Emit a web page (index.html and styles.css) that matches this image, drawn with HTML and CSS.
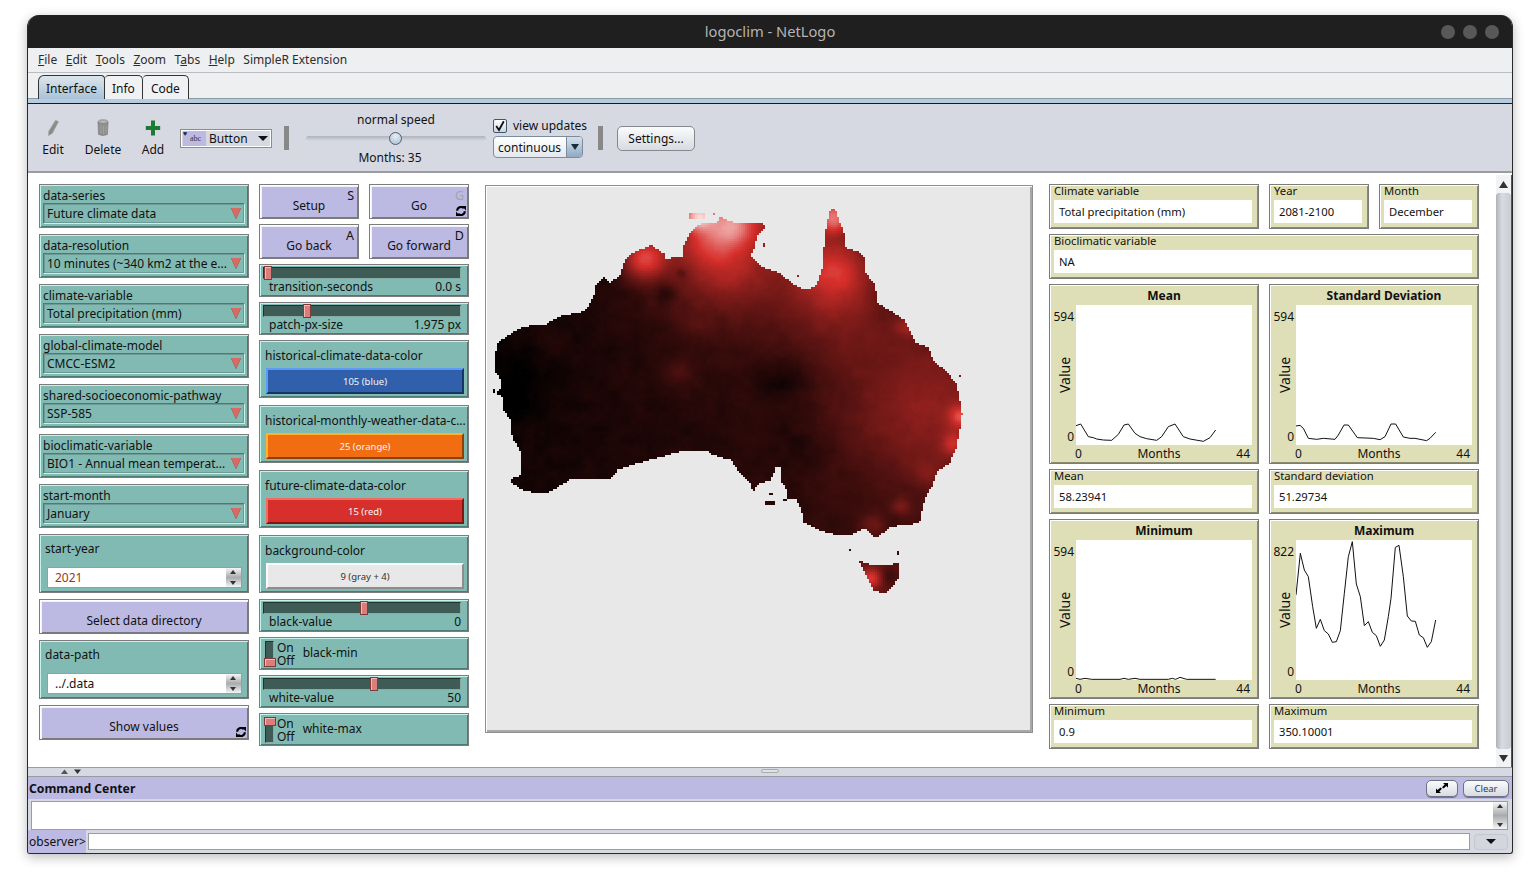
FILE: index.html
```html
<!DOCTYPE html>
<html lang="en">
<head>
<meta charset="utf-8">
<title>logoclim - NetLogo</title>
<link rel="stylesheet" href="styles.css">
</head>
<body>
<svg class="defs" width="0" height="0" aria-hidden="true">
  <symbol id="forever" viewBox="0 0 10 10">
    <path d="M1.2 4.8A3.8 3.8 0 0 1 7.8 2.2" fill="none" stroke="#000" stroke-width="2.1"/>
    <path d="M6 0L10 0L10 4.6Z" fill="#000"/>
    <path d="M8.8 5.2A3.8 3.8 0 0 1 2.2 7.8" fill="none" stroke="#000" stroke-width="2.1"/>
    <path d="M4 10L0 10L0 5.4Z" fill="#000"/>
  </symbol>
</svg>
<div class="window">
  <header class="titlebar">
    <span class="title">logoclim - NetLogo</span>
    <span class="dots"><i></i><i></i><i></i></span>
  </header>
  <nav class="menubar">
    <span><u>F</u>ile</span><span><u>E</u>dit</span><span><u>T</u>ools</span><span><u>Z</u>oom</span><span>T<u>a</u>bs</span><span><u>H</u>elp</span><span>SimpleR Extension</span>
  </nav>
  <div class="tabbar">
    <span class="tab active">Interface</span><span class="tab">Info</span><span class="tab">Code</span>
  </div>
  <div class="toolbar">
    <div class="tool">
      <svg width="14" height="18" viewBox="0 0 14 18"><path d="M9.5 1.2L12.6 2.6L6.5 14.2L2.4 16.8L2.7 12.2Z" fill="#8b8b8b" stroke="#a9a9a9" stroke-width=".6"/></svg>
      <span>Edit</span>
    </div>
    <div class="tool">
      <svg width="14" height="18" viewBox="0 0 14 18"><ellipse cx="7" cy="3" rx="5" ry="2.2" fill="#b5b5b5" stroke="#888" stroke-width=".8"/><path d="M2 3.4L2.6 15.4Q7 17.6 11.4 15.4L12 3.4Q7 6 2 3.4Z" fill="#8f8f8f" stroke="#7c7c7c" stroke-width=".7"/><path d="M5 6.5V15M7.5 6.5V15.6M10 6.5V15" stroke="#a8a8a8" stroke-width=".7"/></svg>
      <span>Delete</span>
    </div>
    <div class="tool">
      <svg width="16" height="18" viewBox="0 0 16 18"><path d="M6 1.5H10V7H15.2V11H10V16.5H6V11H.8V7H6Z" fill="#1c7a32"/></svg>
      <span>Add</span>
    </div>
    <div class="widget-picker">
      <span class="picker-icon"><b>♥</b><em>abc</em></span>
      <span class="picker-text">Button</span>
      <span class="caret"></span>
    </div>
    <span class="sep sep-a"></span>
    <div class="speed">
      <span class="speed-top">normal speed</span>
      <span class="speed-track"><i></i></span>
      <span class="speed-bottom">Months: 35</span>
    </div>
    <div class="updates">
      <label class="check"><span class="box"><svg width="12" height="12" viewBox="0 0 12 12"><path d="M2.2 6L5 10L9.8 1.2" fill="none" stroke="#111" stroke-width="1.8"/></svg></span>view updates</label>
      <div class="combo"><span>continuous</span><span class="combo-arrow"><span class="caret small"></span></span></div>
    </div>
    <span class="sep sep-b"></span>
    <span class="settings">Settings...</span>
  </div>

  <main class="workspace">
    <div class="col col-left">
      <div class="w teal chooser"><span class="label">data-series</span><span class="select"><span>Future climate data</span><i></i></span></div>
      <div class="w teal chooser"><span class="label">data-resolution</span><span class="select"><span>10 minutes (~340 km2 at the e...</span><i></i></span></div>
      <div class="w teal chooser"><span class="label">climate-variable</span><span class="select"><span>Total precipitation (mm)</span><i></i></span></div>
      <div class="w teal chooser"><span class="label">global-climate-model</span><span class="select"><span>CMCC-ESM2</span><i></i></span></div>
      <div class="w teal chooser"><span class="label">shared-socioeconomic-pathway</span><span class="select"><span>SSP-585</span><i></i></span></div>
      <div class="w teal chooser"><span class="label">bioclimatic-variable</span><span class="select"><span>BIO1 - Annual mean temperat...</span><i></i></span></div>
      <div class="w teal chooser"><span class="label">start-month</span><span class="select"><span>January</span><i></i></span></div>
      <div class="w teal input"><span class="label">start-year</span><span class="field"><span class="num">2021</span><span class="spin"></span></span></div>
      <div class="w btn wide">Select data directory</div>
      <div class="w teal input"><span class="label">data-path</span><span class="field"><span>../.data</span><span class="spin"></span></span></div>
      <div class="w btn wide">Show values<svg class="fv"><use href="#forever"/></svg></div>
    </div>

    <div class="col col-mid">
      <div class="stack s5">
        <div class="row">
          <div class="w btn half">Setup<kbd>S</kbd></div>
          <div class="w btn half">Go<kbd class="dim">G</kbd><svg class="fv"><use href="#forever"/></svg></div>
        </div>
        <div class="row">
          <div class="w btn half">Go back<kbd>A</kbd></div>
          <div class="w btn half">Go forward<kbd>D</kbd></div>
        </div>
        <div class="w teal slider"><span class="track"><i class="handle" style="left:0"></i></span><span class="sl-text"><span>transition-seconds</span><span>0.0 s</span></span></div>
        <div class="w teal slider"><span class="track"><i class="handle" style="left:39px"></i></span><span class="sl-text"><span>patch-px-size</span><span>1.975 px</span></span></div>
      </div>
      <div class="stack s7">
        <div class="w teal color"><span class="label">historical-climate-data-color</span><span class="swatch blue">105 (blue)</span></div>
        <div class="w teal color"><span class="label">historical-monthly-weather-data-c...</span><span class="swatch orange">25 (orange)</span></div>
        <div class="w teal color"><span class="label">future-climate-data-color</span><span class="swatch red">15 (red)</span></div>
        <div class="w teal color"><span class="label">background-color</span><span class="swatch gray">9 (gray + 4)</span></div>
      </div>
      <div class="stack s5b">
        <div class="w teal slider"><span class="track"><i class="handle" style="left:96px"></i></span><span class="sl-text"><span>black-value</span><span>0</span></span></div>
        <div class="w teal switch"><span class="sw off"><i></i></span><span class="onoff"><span>On</span><span>Off</span></span><span class="sw-label">black-min</span></div>
        <div class="w teal slider"><span class="track"><i class="handle" style="left:106px"></i></span><span class="sl-text"><span>white-value</span><span>50</span></span></div>
        <div class="w teal switch"><span class="sw"><i></i></span><span class="onoff"><span>On</span><span>Off</span></span><span class="sw-label">white-max</span></div>
      </div>
    </div>

    <div class="view"><canvas id="map" width="544" height="544"></canvas></div>

    <div class="col col-right">
      <div class="row">
        <div class="w mon m-wide"><span class="m-label">Climate variable</span><span class="m-value">Total precipitation (mm)</span></div>
        <div class="w mon m-small"><span class="m-label">Year</span><span class="m-value">2081-2100</span></div>
        <div class="w mon m-small"><span class="m-label">Month</span><span class="m-value">December</span></div>
      </div>
      <div class="w mon"><span class="m-label">Bioclimatic variable</span><span class="m-value">NA</span></div>
      <div class="row">
        <div class="w plot">
          <span class="p-title">Mean</span>
          <span class="p-y"><span>594</span><span class="p-name">Value</span><span>0</span></span>
          <svg class="p-area" viewBox="108 390 528 420" preserveAspectRatio="none"><polyline points="108,752 122,747 145,785 160,788 170,792 190,795 215,796 235,778 252,750 265,747 285,775 300,785 320,791 350,796 365,785 385,755 405,747 430,785 450,792 490,799 510,788 527,765"/></svg>
          <span class="p-x"><span>0</span><span>Months</span><span>44</span></span>
        </div>
        <div class="w plot">
          <span class="p-title">Standard Deviation</span>
          <span class="p-y"><span>594</span><span class="p-name">Value</span><span>0</span></span>
          <svg class="p-area" viewBox="768 390 528 420" preserveAspectRatio="none"><polyline points="768,753 780,751 790,760 805,790 830,793 850,790 885,793 895,780 912,750 925,750 952,788 1000,790 1020,794 1035,785 1053,747 1067,747 1090,786 1110,790 1125,790 1160,797 1170,790 1187,772"/></svg>
          <span class="p-x"><span>0</span><span>Months</span><span>44</span></span>
        </div>
      </div>
      <div class="row">
        <div class="w mon m-half"><span class="m-label">Mean</span><span class="m-value">58.23941</span></div>
        <div class="w mon m-half"><span class="m-label">Standard deviation</span><span class="m-value">51.29734</span></div>
      </div>
      <div class="row">
        <div class="w plot">
          <span class="p-title">Minimum</span>
          <span class="p-y"><span>594</span><span class="p-name">Value</span><span>0</span></span>
          <svg class="p-area" viewBox="108 90 528 420" preserveAspectRatio="none"><polyline points="108,505 120,508 135,505 155,508 240,508 252,505 265,508 285,505 300,508 385,508 397,505 407,508 420,502 440,508 527,508"/></svg>
          <span class="p-x"><span>0</span><span>Months</span><span>44</span></span>
        </div>
        <div class="w plot">
          <span class="p-title">Maximum</span>
          <span class="p-y"><span>822</span><span class="p-name">Value</span><span>0</span></span>
          <svg class="p-area" viewBox="768 90 528 420" preserveAspectRatio="none"><polyline points="768,255 781,130 793,180 805,200 818,290 829,355 841,328 853,362 865,372 877,397 889,395 901,362 913,250 925,140 937,95 949,222 961,260 973,347 985,335 997,367 1009,377 1021,409 1033,390 1045,320 1053,265 1066,112 1077,106 1090,200 1102,318 1114,333 1126,334 1138,375 1150,383 1162,412 1174,395 1187,330"/></svg>
          <span class="p-x"><span>0</span><span>Months</span><span>44</span></span>
        </div>
      </div>
      <div class="row">
        <div class="w mon m-half"><span class="m-label">Minimum</span><span class="m-value">0.9</span></div>
        <div class="w mon m-half"><span class="m-label">Maximum</span><span class="m-value">350.10001</span></div>
      </div>
    </div>

    <div class="vscroll">
      <span class="sb-btn"><svg width="9" height="7" viewBox="0 0 9 7"><path d="M4.5 0L9 7H0Z" fill="#333"/></svg></span>
      <span class="sb-thumb"></span>
      <span class="sb-btn"><svg width="9" height="7" viewBox="0 0 9 7"><path d="M0 0H9L4.5 7Z" fill="#333"/></svg></span>
    </div>
  </main>

  <div class="divider">
    <span class="div-arrows"><svg width="22" height="5" viewBox="0 0 22 5"><path d="M0 5L3.5 .5L7 5Z" fill="#555"/><path d="M13 .5H20L16.5 5Z" fill="#333"/></svg></span>
    <span class="div-grip"></span>
  </div>
  <div class="cc-head">
    <span class="cc-title">Command Center</span>
    <span class="cc-btn cc-expand"><svg width="14" height="12" viewBox="0 0 14 12"><path d="M8 1H13V5.5L11.3 4L8.6 6.6L7 5.2L9.7 2.6ZM6 11H1V6.5L2.7 8L5.4 5.4L7 6.8L4.3 9.4Z" fill="#000"/></svg></span>
    <span class="cc-btn cc-clear">Clear</span>
  </div>
  <div class="cc-output"><span class="spin cc-spin"></span></div>
  <div class="cc-input">
    <span class="observer">observer&gt;</span>
    <span class="cc-field"></span>
    <span class="cc-drop"><span class="caret"></span></span>
  </div>
</div>
<script src="map.js"></script>
</body>
</html>
```
FILE: styles.css
```css
* { box-sizing: border-box; }
html, body { margin: 0; height: 100%; }
body {
  background: #fff;
  padding: 15px 27px 40px;
  font-family: "Noto Sans", "Open Sans", sans-serif;
  font-size: 12px;
  color: #111;
  overflow: hidden;
}
.defs { position: absolute; }
.window {
  width: 1486px;
  height: 839px;
  display: flex;
  flex-direction: column;
  background: #d6d9e2;
  border-radius: 12px 12px 3px 3px;
  border: 1px solid #2a2a2a;
  border-top: 0;
  overflow: hidden;
  box-shadow: 0 3px 12px rgba(0,0,0,.28);
}

/* title bar */
.titlebar {
  position: relative;
  height: 33px;
  flex: none;
  background: #1f1f1f;
  display: flex;
  align-items: center;
  justify-content: center;
  margin: 0 -1px;
}
.title { color: #b4b4b4; font-size: 14.7px; margin-top: -1px; }
.dots { position: absolute; right: 14px; top: 10px; display: flex; gap: 8px; }
.dots i { width: 14px; height: 14px; border-radius: 50%; background: #585858; }

/* menu */
.menubar {
  height: 25px;
  flex: none;
  background: #eeeff1;
  display: flex;
  align-items: center;
  padding: 0 0 2px 10px;
  gap: 8.5px;
  color: #2c2c2c;
  border-bottom: 1px solid #b9bcc3;
}

/* tabs */
.tabbar {
  height: 31px;
  flex: none;
  background: #eeeff1;
  display: flex;
  align-items: flex-end;
  padding: 0 0 4px 10px;
  border-bottom: 1px solid #101a28;
  position: relative;
}
.tabbar::after {
  content: "";
  position: absolute;
  left: 0; right: 0; bottom: 0;
  height: 4px;
  background: #b5cbe0;
  border-top: 1px solid #8a99a8;
}
.tab {
  height: 24px;
  padding: 2px 7px 0;
  border: 1px solid #333;
  border-bottom: 0;
  border-left: 0;
  border-radius: 4px 5px 0 0;
  display: flex;
  align-items: center;
  background: #f0f1f3;
  position: relative;
  z-index: 1;
}
.tab:last-child { padding: 2px 8px 0; }
.tab.active {
  width: 67px;
  justify-content: center;
  border-left: 1px solid #333;
  background: linear-gradient(#dde5ec, #a8c3da);
  border-radius: 6px 4px 0 0;
}

/* toolbar */
.toolbar {
  height: 69px;
  flex: none;
  display: flex;
  align-items: flex-start;
  border-bottom: 2px solid #9a9ca2;
  position: relative;
}
.tool {
  width: 50px;
  padding-top: 15px;
  display: flex;
  flex-direction: column;
  align-items: center;
  gap: 4px;
  line-height: 17px;
}
.widget-picker {
  margin: 25px 0 0 2px;
  width: 92px;
  height: 19px;
  display: flex;
  align-items: center;
  border: 1px solid #8c8c8c;
  box-shadow: inset 1px 1px 0 #fff, inset -1px -1px 0 #fff;
  padding: 2px 3px 2px 2px;
}
.picker-icon {
  width: 23px; height: 15px;
  background: #bcbae3;
  position: relative;
  font-size: 8px;
  display: block;
}
.picker-icon b { position: absolute; left: 0; top: -2px; font-size: 7px; color: #223; line-height: 9px; }
.picker-icon em { position: absolute; left: 7px; top: 2px; font: 8px/12px "Liberation Serif", serif; color: #334; }
.picker-text { margin-left: 3px; flex: 1; }
.caret {
  display: block;
  width: 0; height: 0;
  border-left: 5px solid transparent;
  border-right: 5px solid transparent;
  border-top: 5px solid #111;
}
.caret.small { border-left-width: 4px; border-right-width: 4px; border-top-width: 6px; border-top-color: #1a2a3a; }
.sep { width: 5px; height: 24px; background: #888; display: block; margin-top: 22px; flex: none; }
.sep-a { margin-left: 12px; }
.speed {
  width: 180px;
  margin-left: 17px;
  height: 66px;
  position: relative;
  display: block;
}
.speed-top { position: absolute; left: 0; right: 0; top: 7px; text-align: center; }
.speed-bottom { position: absolute; left: 0; right: 12px; top: 45px; text-align: center; }
.speed-track {
  position: absolute;
  left: 0; right: 0; top: 32px;
  height: 5px;
  border-radius: 3px;
  background: linear-gradient(#aeb3bc, #d6dae0);
}
.speed-track i {
  position: absolute;
  left: 83px; top: -4px;
  width: 13px; height: 13px;
  border-radius: 50%;
  border: 1px solid #4d5f70;
  background: radial-gradient(circle at 50% 30%, #e6edf4, #a7bdd2);
}
.updates { margin-left: 7px; padding-top: 14px; display: flex; flex-direction: column; width: 95px; }
.check { display: flex; align-items: center; gap: 6px; line-height: 16px; white-space: nowrap; }
.box {
  width: 14px; height: 14px;
  border: 1px solid #3e5870;
  border-radius: 2px;
  background: linear-gradient(#fff, #cbd6e0);
  display: flex;
  align-items: center;
  justify-content: center;
}
.combo {
  margin-top: 2px;
  width: 90px;
  height: 22px;
  border: 1px solid #7d8c9c;
  border-radius: 4px;
  background: linear-gradient(#fff, #e3e8ee);
  display: flex;
  align-items: center;
  justify-content: space-between;
  padding-left: 4px;
  overflow: hidden;
}
.combo-arrow {
  width: 16px;
  height: 100%;
  background: linear-gradient(#d5e0eb, #8faac3);
  border-left: 1px solid #7d8c9c;
  display: flex;
  align-items: center;
  justify-content: center;
}
.sep-b { margin-left: 10px; }
.settings {
  margin: 22px 0 0 14px;
  width: 78px;
  height: 25px;
  border: 1px solid #84888f;
  border-radius: 5px;
  background: linear-gradient(#fafbfc, #d8dbe2);
  display: flex;
  align-items: center;
  justify-content: center;
}

/* workspace */
.workspace {
  height: 594px;
  flex: none;
  background: #fff;
  display: flex;
  padding: 11px 0 0 11px;
  position: relative;
}
.col { display: flex; flex-direction: column; width: 210px; flex: none; }
.col-left { gap: 6px; }
.col-mid { margin-left: 10px; }
.col-right { width: 430px; margin-left: 16px; gap: 5px; }
.stack { display: flex; flex-direction: column; }
.s5 { gap: 5px; }
.s7 { gap: 7px; margin-top: 5px; }
.s5b { gap: 5px; margin-top: 6px; }
.row { display: flex; gap: 10px; }

.w { border: 1px solid #7c7c7c; position: relative; flex: none; }
.teal {
  background: #81bab2;
  box-shadow: inset 1px 1px 0 #c2f4ec, inset -1px -1px 0 #4e7a74;
}
.label { display: block; line-height: 15px; padding-left: 3px; white-space: nowrap; }
.chooser { height: 44px; padding-top: 3px; }
.select {
  margin: 0 3px 0 3px;
  height: 21px;
  display: flex;
  align-items: center;
  justify-content: space-between;
  padding: 0 3px 0 3px;
  border: 1px solid;
  border-color: #4e7a74 #c2f4ec #c2f4ec #4e7a74;
  outline: 1px solid #6d9a94;
  outline-offset: -2px;
  white-space: nowrap;
}
.select i {
  width: 0; height: 0;
  border-left: 5.5px solid transparent;
  border-right: 5.5px solid transparent;
  border-top: 11px solid #d96a62;
  filter: drop-shadow(0 0 .6px #334);
}
.input { height: 59px; padding-top: 6px; }
.input .label { padding-left: 5px; line-height: 16px; }
.field {
  margin: 10px 6px 0 7px;
  height: 21px;
  background: #fff;
  border: 1px solid #9c9c9c;
  display: flex;
  align-items: center;
  justify-content: space-between;
  padding-left: 7px;
}
.num { color: #99390f; }
.spin {
  width: 15px;
  height: 100%;
  flex: none;
  background:
    linear-gradient(#f4f5f6, #a9abae 50%, #f4f5f6);
  position: relative;
}
.spin::before, .spin::after {
  content: "";
  position: absolute;
  left: 4px;
  border-left: 3.5px solid transparent;
  border-right: 3.5px solid transparent;
}
.spin::before { top: 2px; border-bottom: 4px solid #333; }
.spin::after { bottom: 2px; border-top: 4px solid #333; }
.btn {
  background: #bcbae3;
  box-shadow: inset 1px 1px 0 #fff, inset 2px 2px 0 #f2f2fa, inset -1px -1px 0 #7a7a7a;
  display: flex;
  align-items: center;
  justify-content: center;
  padding-top: 8px;
  height: 35px;
}
.half { width: 100px; }
.btn kbd {
  position: absolute;
  right: 4px;
  top: 2px;
  font: inherit;
  font-size: 12.5px;
}
.btn kbd.dim { color: #a3a3a8; }
.fv { position: absolute; right: 2px; bottom: 2px; width: 10px; height: 10px; }
.slider { height: 33px; padding: 2px 7px 0 2px; }
.track {
  display: block;
  height: 12px;
  margin-left: 1px;
  position: relative;
  background: #3f5b56;
  border: 1px solid;
  border-color: #22322f #87aca6 #87aca6 #22322f;
}
.handle {
  position: absolute;
  top: -2px;
  width: 8px;
  height: 14px;
  background: #db7d7b;
  border: 1px solid #7d3b39;
  box-shadow: inset 1px 1px 0 #f3b9b7;
}
.sl-text {
  display: flex;
  justify-content: space-between;
  line-height: 15px;
  margin-left: 7px;
}
.color { height: 58px; padding-top: 6px; }
.color .label { padding-left: 5px; line-height: 17px; }
.swatch {
  margin: 4px 4px 0 6px;
  height: 26px;
  display: flex;
  align-items: center;
  justify-content: center;
  font-size: 9.5px;
  color: #f5f5f5;
  border: 2px solid;
}
.blue { background: #3060ac; border-color: #5c9cf6 #173560 #173560 #5c9cf6; }
.orange { background: #f26c12; border-color: #ffb32c #8c4206 #8c4206 #ffb32c; }
.red { background: #d72f2b; border-color: #f46c60 #7e1815 #7e1815 #f46c60; }
.gray { background: #e8e8e8; color: #333; border-color: #fafafa #8d8d8d #8d8d8d #fafafa; }
.switch { height: 33px; display: flex; align-items: center; padding-left: 3px; }
.sw {
  width: 9px;
  height: 26px;
  margin-left: 2px;
  background: #3f5b56;
  position: relative;
  display: block;
  border: 1px solid;
  border-color: #22322f #87aca6 #87aca6 #22322f;
}
.sw i {
  position: absolute;
  left: -2px;
  top: -1px;
  width: 12px;
  height: 9px;
  background: #db7d7b;
  border: 1px solid #7d3b39;
  box-shadow: inset 1px 1px 0 #f3b9b7;
}
.sw.off i { top: auto; bottom: -1px; }
.onoff { display: flex; flex-direction: column; line-height: 13px; margin-left: 3px; }
.sw-label { margin-left: 8px; margin-top: -3px; }

/* view */
.view {
  width: 548px;
  height: 548px;
  margin: 1px 0 0 16px;
  flex: none;
  background: #e8e8e8;
  border: 1px solid #8f8f8f;
  box-shadow: inset 1px 1px 0 #fff, inset -2px -2px 0 #a8a8a8;
  padding: 1px;
}
.view canvas { display: block; }

/* monitors */
.mon {
  background: #dfdfb7;
  box-shadow: inset 1px 1px 0 #fff, inset -1px -1px 0 #8a8a70;
  height: 45px;
  padding: 0 5px 0 4px;
  display: flex;
  flex-direction: column;
  font-size: 11.25px;
}
.m-wide, .m-half { width: 210px; }
.m-small { width: 100px; }
.m-label { line-height: 12px; height: 14px; }
.m-value {
  background: #fff;
  height: 23px;
  margin: 1px 1px 0 0;
  padding-left: 5px;
  display: flex;
  align-items: center;
  white-space: nowrap;
}

/* plots */
.plot {
  width: 210px;
  height: 180px;
  background: #dfdfb7;
  box-shadow: inset 1px 1px 0 #fff, inset -1px -1px 0 #8a8a70;
  display: grid;
  grid-template-columns: 26px 176px;
  grid-template-rows: 20px 140px 18px;
}
.p-title { grid-column: 2; font-weight: 700; text-align: center; line-height: 21px; }
.p-y {
  grid-column: 1;
  grid-row: 2;
  display: flex;
  flex-direction: column;
  justify-content: space-between;
  align-items: flex-end;
  padding: 4px 2px 0 0;
  line-height: 16px;
  position: relative;
}
.p-name {
  position: absolute;
  left: 7px;
  top: 50%;
  writing-mode: vertical-rl;
  transform: translateY(-50%) rotate(180deg);
  font-size: 14px;
  line-height: 16px;
}
.p-area { grid-column: 2; grid-row: 2; width: 176px; height: 140px; background: #fff; display: block; }
.p-area polyline { fill: none; stroke: #111; stroke-width: 1; vector-effect: non-scaling-stroke; }
.p-x {
  grid-column: 2;
  grid-row: 3;
  display: grid;
  grid-template-columns: 1fr 1fr 1fr;
  line-height: 18px;
  padding: 0 2px 0 0;
}
.p-x span:first-child { margin-left: -1px; }
.p-x span:nth-child(2) { text-align: center; margin-left: -19px; margin-right: -11px; }
.p-x span:last-child { text-align: right; }

/* scrollbar */
.vscroll {
  position: absolute;
  right: 0;
  top: 2px;
  bottom: 0;
  width: 16px;
  display: flex;
  flex-direction: column;
  border-right: 1px solid #555;
}
.sb-btn { height: 18px; display: flex; align-items: center; justify-content: center; background: #f2f3f5; flex: none; }
.sb-thumb { flex: 1; background: linear-gradient(90deg, #aeb2ba, #d8dbe1 40%, #c8ccd3); border-radius: 3px; }

/* divider */
.divider {
  height: 10px;
  flex: none;
  position: relative;
  background: #d6d9e2;
  border-top: 1px solid #9a9ca2;
  border-bottom: 1px solid #9a9ca2;
  display: flex;
  align-items: center;
  justify-content: center;
}
.div-arrows { position: absolute; left: 33px; top: 1px; height: 6px; display: flex; }
.div-grip { width: 18px; height: 4px; border: 1px solid #aaa; border-radius: 2px; background: #e0e2e8; margin-top: -3px; }

/* command center */
.cc-head {
  height: 22px;
  flex: none;
  background: #bcbae3;
  display: flex;
  align-items: center;
  padding: 0 3px 0 1px;
  gap: 5px;
}
.cc-title { font-weight: 700; font-size: 12.2px; margin-right: auto; }
.cc-btn {
  height: 17px;
  border: 1px solid #6f7380;
  border-radius: 5px;
  background: linear-gradient(#fafbfc, #d7dae2);
  display: flex;
  align-items: center;
  justify-content: center;
  box-shadow: 0 1px 0 #777;
}
.cc-expand { width: 32px; }
.cc-clear { width: 46px; font-size: 9.5px; color: #2b3a55; }
.cc-output {
  height: 29px;
  flex: none;
  margin: 2px 4px 0 3px;
  background: #fff;
  border: 1px solid #9a9ca2;
  display: flex;
  justify-content: flex-end;
}
.cc-spin { width: 14px; }
.cc-input {
  flex: 1;
  display: flex;
  align-items: center;
}
.observer {
  width: 58px;
  height: 100%;
  background: #bcbae3;
  display: flex;
  align-items: center;
  padding-left: 1px;
  flex: none;
}
.cc-field {
  width: 1382px;
  height: 17px;
  margin-left: 2px;
  background: #fff;
  border: 1px solid #9a9ca2;
}
.cc-drop {
  width: 34px;
  height: 16px;
  margin-left: 4px;
  border-radius: 4px;
  background: #d3d6dd;
  border: 1px solid #c4c7cd;
  display: flex;
  align-items: center;
  justify-content: center;
}
```
FILE: map.js
```js
(function () {
  var main = [40,545,48,490,80,465,120,440,185,432,220,410,290,395,305,375,320,345,325,315,345,290,365,310,395,280,405,240,430,218,480,195,515,220,520,235,565,232,570,200,590,155,620,130,665,130,670,110,700,125,740,130,790,130,800,140,775,170,770,200,757,228,790,260,840,280,880,315,910,330,940,320,960,260,965,170,980,90,995,90,1020,160,1025,205,1060,215,1075,230,1080,280,1105,310,1115,370,1190,420,1220,490,1255,500,1270,540,1305,575,1335,610,1350,700,1345,740,1335,800,1315,850,1280,875,1265,920,1245,960,1230,1030,1150,1040,1110,1075,1075,1045,1040,1065,1005,1068,950,1050,905,1025,900,985,885,960,860,955,855,915,840,905,842,860,830,860,815,900,775,915,765,935,755,905,720,870,705,840,650,825,635,812,560,815,510,830,440,850,385,870,365,900,250,900,190,940,130,935,88,910,90,895,115,885,115,820,90,770,85,720,65,690,65,650,45,640,60,625,60,600,40,570];
  var tas = [1060,1140,1100,1158,1175,1150,1175,1185,1160,1215,1140,1238,1105,1235,1085,1195];
  var islands = [[588,102,630,118],[650,97,658,106],[793,188,798,202],[888,285,893,291],[1033,1105,1039,1115],[1170,1116,1175,1122],[800,965,826,973],[810,942,820,947],[850,960,860,962],[1342,585,1348,588],[34,630,40,636]];

  function inPoly(p, x, y) {
    var c = false;
    for (var i = 0, j = p.length - 2; i < p.length; j = i, i += 2) {
      if ((p[i + 1] > y) !== (p[j + 1] > y) &&
          x < (p[j] - p[i]) * (y - p[i + 1]) / (p[j + 1] - p[i + 1]) + p[i]) c = !c;
    }
    return c;
  }
  function inside(x, y) {
    if (inPoly(main, x, y) || inPoly(tas, x, y)) return true;
    return islands.some(function (r) { return x >= r[0] && x <= r[2] && y >= r[1] && y <= r[3]; });
  }

  var seed = 0;
  var table = [];
  for (var k = 0; k < 4096; k++) { seed = (seed * 1664525 + 1013904223) >>> 0; table.push(seed / 4294967296); }
  function lattice(i, j) { return table[((i * 73 + j * 179) % 4096 + 4096) % 4096]; }
  function noise(x, y) {
    var i = Math.floor(x), j = Math.floor(y), u = x - i, v = y - j;
    u = u * u * (3 - 2 * u); v = v * v * (3 - 2 * v);
    return (lattice(i, j) * (1 - u) + lattice(i + 1, j) * u) * (1 - v) +
           (lattice(i, j + 1) * (1 - u) + lattice(i + 1, j + 1) * u) * v;
  }
  function g(x, y, cx, cy, s, a) {
    var d = ((x - cx) * (x - cx) + (y - cy) * (y - cy)) / (2 * s * s);
    return a * Math.exp(-d);
  }
  var blobs = [
    [1250,680,170,.2],[700,190,170,.24],[690,270,70,.1],[460,235,42,.4],[640,170,60,.2],[710,130,45,.36],[610,105,30,.5],
    [990,110,34,.5],[995,270,70,.3],[1000,400,110,.13],[1345,710,22,.3],[1325,790,24,.2],[1195,440,22,.16],
    [1100,1035,24,.12],[1180,980,18,.12],[1250,880,28,.08],[555,580,34,.08],[200,490,35,.03],[600,430,30,.04],
    [850,600,50,-.07],[900,800,60,-.04],[100,620,80,-.05],[520,340,18,-.08],[565,280,10,-.08]
  ];
  function field(x, y) {
    if (y > 1130) {
      return .2 + g(x, y, 1095, 1195, 22, .32) + g(x, y, 1140, 1190, 18, -.08);
    }
    var v = .04 + .09 * Math.max(0, (x - 40) / 1310);
    for (var b = 0; b < blobs.length; b++) v += g(x, y, blobs[b][0], blobs[b][1], blobs[b][2], blobs[b][3]);
    v += (noise(x / 34, y / 34) - .5) * .03 + (noise(x / 11, y / 11) - .5) * .016;
    return Math.max(0, Math.min(1, v));
  }
  function colour(v) {
    var r, gr, bl;
    if (v < .5) { var t = v * 2; r = 215 * t; gr = 47 * t; bl = 43 * t; }
    else { var s = (v - .5) * 2; r = 215 + 40 * s; gr = 47 + 208 * s; bl = 43 + 212 * s; }
    return "rgb(" + Math.round(r) + "," + Math.round(gr) + "," + Math.round(bl) + ")";
  }
  var ctx = document.getElementById("map").getContext("2d");
  var ox = 487, oy = 187, step = 2;
  for (var py = 0; py < 544; py += step) {
    for (var px = 0; px < 544; px += step) {
      var zx = (ox + px + 1 - 480) * 2.8, zy = (oy + py + 1 - 180) * 3;
      if (inside(zx, zy)) {
        ctx.fillStyle = colour(field(zx, zy));
        ctx.fillRect(px, py, step, step);
      }
    }
  }
})();
```
